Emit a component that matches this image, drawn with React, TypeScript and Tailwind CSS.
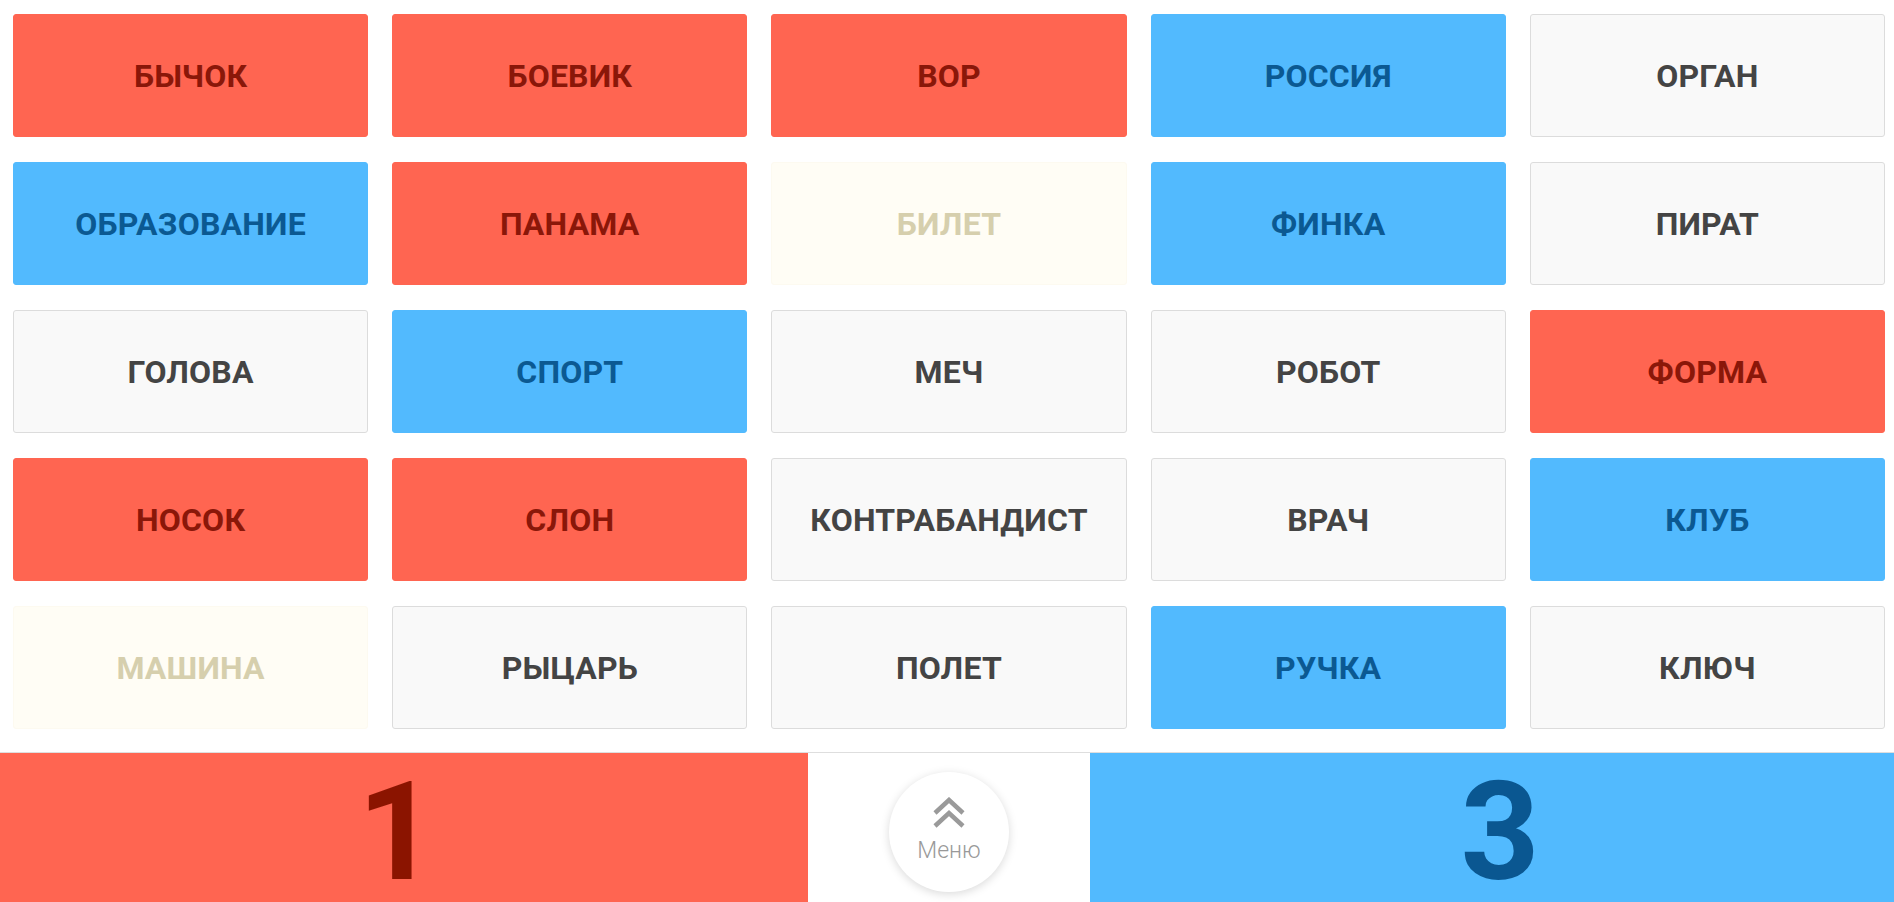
import React from 'react';

type Team = 'red' | 'blue' | 'neutral' | 'killer';

interface Word {
  text: string;
  team: Team;
}

const words: Word[] = [
  { text: 'БЫЧОК', team: 'red' },
  { text: 'БОЕВИК', team: 'red' },
  { text: 'ВОР', team: 'red' },
  { text: 'РОССИЯ', team: 'blue' },
  { text: 'ОРГАН', team: 'neutral' },
  { text: 'ОБРАЗОВАНИЕ', team: 'blue' },
  { text: 'ПАНАМА', team: 'red' },
  { text: 'БИЛЕТ', team: 'killer' },
  { text: 'ФИНКА', team: 'blue' },
  { text: 'ПИРАТ', team: 'neutral' },
  { text: 'ГОЛОВА', team: 'neutral' },
  { text: 'СПОРТ', team: 'blue' },
  { text: 'МЕЧ', team: 'neutral' },
  { text: 'РОБОТ', team: 'neutral' },
  { text: 'ФОРМА', team: 'red' },
  { text: 'НОСОК', team: 'red' },
  { text: 'СЛОН', team: 'red' },
  { text: 'КОНТРАБАНДИСТ', team: 'neutral' },
  { text: 'ВРАЧ', team: 'neutral' },
  { text: 'КЛУБ', team: 'blue' },
  { text: 'МАШИНА', team: 'killer' },
  { text: 'РЫЦАРЬ', team: 'neutral' },
  { text: 'ПОЛЕТ', team: 'neutral' },
  { text: 'РУЧКА', team: 'blue' },
  { text: 'КЛЮЧ', team: 'neutral' },
];

const cardStyles: Record<Team, string> = {
  red: 'bg-[#ff6551] border-[#ff6551] text-[#8a1709]',
  blue: 'bg-[#52bafe] border-[#52bafe] text-[#0b5992]',
  neutral: 'bg-[#f9f9f9] border-[#dcdcdc] text-[#444444]',
  killer: 'bg-[#fffdf5] border-[#fdfaf0] text-[#d6cfad]',
};

const Card: React.FC<{ word: Word }> = ({ word }) => (
  <div
    className={`flex items-center justify-center rounded-[3px] border ${cardStyles[word.team]}`}
  >
    <span className="font-['Roboto'] text-[32px] font-bold tracking-[0.2px]">{word.text}</span>
  </div>
);

export default function App() {
  return (
    <div className="flex h-screen flex-col bg-white font-['Roboto',sans-serif]">
      {/* Board */}
      <div className="grid grid-cols-5 grid-rows-[repeat(5,123px)] gap-x-[24px] gap-y-[25px] pl-[13px] pr-[9px] pt-[14px]">
        {words.map((w) => (
          <Card key={w.text} word={w} />
        ))}
      </div>

      {/* Score bar */}
      <div className="mt-[23px] flex h-[150px] border-t border-[#dedede]">
        <div className="flex w-[808px] items-end justify-center bg-[#ff6551] pb-[15px] pr-[18px]">
          <span className="text-[138px] font-bold leading-[110px] tracking-[-4px] text-[#8b1400]">1</span>
        </div>
        <div className="flex flex-1 items-center justify-center bg-white pt-[8px]">
          <button className="flex h-[120px] w-[120px] flex-col items-center justify-start rounded-full bg-white pt-[25px] shadow-[0_2px_10px_rgba(0,0,0,0.15)]">
            <svg width="34" height="32" viewBox="0 0 34 32" fill="none">
              <polyline points="3,16 17,3 31,16" stroke="#9a9a9a" strokeWidth="4.5" />
              <polyline points="3,29 17,16 31,29" stroke="#9a9a9a" strokeWidth="4.5" />
            </svg>
            <span className="mt-[10px] text-[23px] font-light leading-none text-[#999999]">Меню</span>
          </button>
        </div>
        <div className="flex w-[804px] items-end justify-center bg-[#52bafe] pb-[15px] pl-[16px]">
          <span className="text-[138px] font-bold leading-[110px] text-[#0a5791]">3</span>
        </div>
      </div>
    </div>
  );
}
